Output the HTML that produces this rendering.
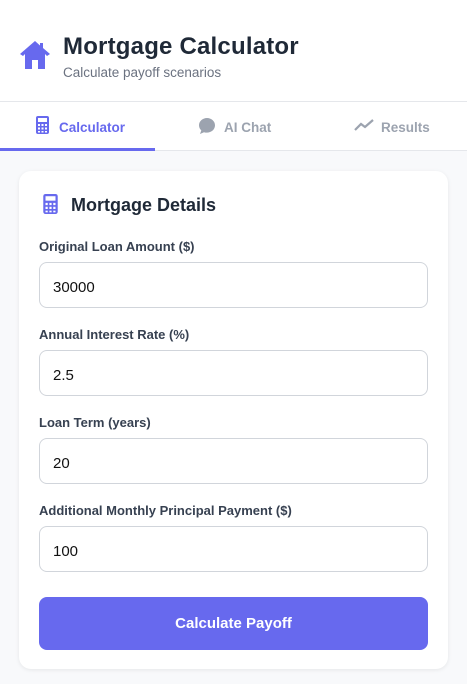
<!DOCTYPE html>
<html><head><style>
*{box-sizing:border-box;margin:0;padding:0}
body{width:467px;height:684px;overflow:hidden;background:#f8f9fb;font-family:"Liberation Sans",sans-serif;color:#1f2937;position:relative}
.hdr{position:absolute;left:0;top:0;width:467px;height:102px;background:#fff;border-bottom:1px solid #e5e7eb}
.h1{position:absolute;left:63px;top:33px;font-size:24px;font-weight:bold;color:#1f2937;letter-spacing:.2px}
.sub{position:absolute;left:63px;top:65px;font-size:13.5px;color:#6b7280}
.tabs{position:absolute;left:0;top:102px;width:467px;height:49px;background:#fff;border-bottom:1px solid #e5e7eb}
.tab{position:absolute;top:18px;font-size:13.5px;font-weight:bold;color:#9ca3af}
.ul{position:absolute;left:0;top:46px;width:155px;height:3px;background:#6769ee}
.card{position:absolute;left:19px;top:171px;width:429px;height:498px;background:#fff;border-radius:12px;box-shadow:0 1px 4px rgba(0,0,0,.08)}
.ct{position:absolute;left:52px;top:24px;font-size:18px;font-weight:bold;color:#1f2937}
.lb{position:absolute;left:20px;font-size:13px;font-weight:bold;color:#374151}
.in{position:absolute;left:20px;width:389px;height:46px;border:1px solid #d1d5db;border-radius:8px;padding-left:13px;padding-top:3px;line-height:44px;font-size:15px;color:#111}
.btn{position:absolute;left:20px;top:426px;width:389px;height:53px;background:#6769ee;border-radius:8px;color:#fff;font-weight:bold;font-size:15px;text-align:center;line-height:53px}
</style></head><body>
<div class="hdr">
<svg style="position:absolute;left:19px;top:40px" width="32" height="30" viewBox="0 0 32 30"><path d="M16 1 L1 14 L4 16 L6 14 V29 H13 V20 H19 V29 H26 V14 L28 16 L31 14 L24 8 V3 H21 V5.5 Z" fill="#6769ee"/></svg>
<div class="h1">Mortgage Calculator</div>
<div class="sub">Calculate payoff scenarios</div>
</div>
<div class="tabs">
<svg style="position:absolute;left:36px;top:14px" width="13" height="18" viewBox="0 0 13 18"><rect width="13" height="18" rx="2" fill="#6769ee"/><rect x="2" y="2" width="9" height="4" fill="#fff"/><g fill="#fff"><rect x="2" y="8" width="2" height="2"/><rect x="5.5" y="8" width="2" height="2"/><rect x="9" y="8" width="2" height="2"/><rect x="2" y="11.5" width="2" height="2"/><rect x="5.5" y="11.5" width="2" height="2"/><rect x="9" y="11.5" width="2" height="2"/><rect x="2" y="15" width="2" height="1.5"/><rect x="5.5" y="15" width="2" height="1.5"/><rect x="9" y="15" width="2" height="1.5"/></g></svg>
<div class="tab" style="left:59px;color:#6769ee">Calculator</div>
<svg style="position:absolute;left:198px;top:15px" width="18" height="18" viewBox="0 0 18 18"><path d="M9 1C4.6 1 1 4.2 1 8.3c0 2 .9 3.8 2.3 5.1L2 17l4-1.8c.9.3 1.9.4 3 .4 4.4 0 8-3.2 8-7.3S13.4 1 9 1z" fill="#9ca3af"/></svg>
<div class="tab" style="left:224px">AI Chat</div>
<svg style="position:absolute;left:354px;top:17px" width="20" height="12" viewBox="0 0 20 12"><path d="M1 11 L7 5 L11 8 L19 1" stroke="#9ca3af" stroke-width="2.2" fill="none"/></svg>
<div class="tab" style="left:381px">Results</div>
<div class="ul"></div>
</div>
<div class="card">
<svg style="position:absolute;left:24px;top:23px" width="15" height="20" viewBox="0 0 13 18"><rect width="13" height="18" rx="2" fill="#6769ee"/><rect x="2" y="2" width="9" height="4" fill="#fff"/><g fill="#fff"><rect x="2" y="8" width="2" height="2"/><rect x="5.5" y="8" width="2" height="2"/><rect x="9" y="8" width="2" height="2"/><rect x="2" y="11.5" width="2" height="2"/><rect x="5.5" y="11.5" width="2" height="2"/><rect x="9" y="11.5" width="2" height="2"/><rect x="2" y="15" width="2" height="1.5"/><rect x="5.5" y="15" width="2" height="1.5"/><rect x="9" y="15" width="2" height="1.5"/></g></svg>
<div class="ct">Mortgage Details</div>
<div class="lb" style="top:68px">Original Loan Amount ($)</div>
<div class="in" style="top:91px">30000</div>
<div class="lb" style="top:156px">Annual Interest Rate (%)</div>
<div class="in" style="top:179px">2.5</div>
<div class="lb" style="top:244px">Loan Term (years)</div>
<div class="in" style="top:267px">20</div>
<div class="lb" style="top:332px">Additional Monthly Principal Payment ($)</div>
<div class="in" style="top:355px">100</div>
<div class="btn">Calculate Payoff</div>
</div>
</body></html>
